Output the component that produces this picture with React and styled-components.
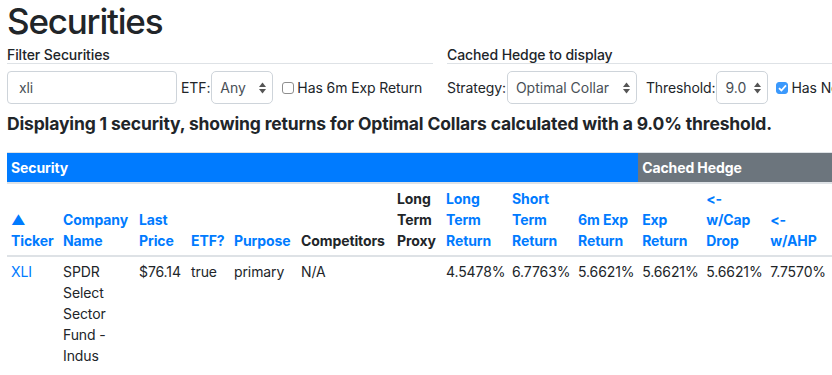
import React from "react"
import styled, { createGlobalStyle } from "styled-components"

const GlobalStyle = createGlobalStyle`
body {
  margin: 0;
  font-family: Inter, "Liberation Sans", sans-serif;
  font-size: 14px;
  line-height: 21px;
  letter-spacing: -0.1px;
  font-feature-settings: "calt" 0, "liga" 0;
  color: #212529;
  background: #fff;
}
`
const Page = styled.div`
width: 100%;
overflow: hidden;
`
const Content = styled.div`
padding-left: 7px;
width: 1000px;
`
const Title = styled.h1`
font-size: 35px;
line-height: 42px;
font-weight: 500;
margin: 0 0 4px 0;
letter-spacing: -1.2px;
`
const FilterRow = styled.div`
display: flex;
gap: 14px;
`
const FilterCol = styled.div`
width: 426px;
flex-shrink: 0;
`
const Legend = styled.div`
font-size: 14px;
line-height: 17px;
font-weight: 500;
border-bottom: 1px solid #dee2e6;
margin-bottom: 7px;
`
const Controls = styled.div`
display: flex;
align-items: center;
white-space: nowrap;
`
const TextInput = styled.div`
width: 170px;
height: 33px;
flex-shrink: 0;
box-sizing: border-box;
border: 1px solid #ced4da;
border-radius: 4px;
padding: 0 11px;
display: flex;
align-items: center;
font-size: 14px;
color: #495057;
margin-right: 4px;
`
const Label = styled.span`
margin-right: 1px;
margin-left: ${p => p.$gap || 0}px;
`
const SelectBox = styled.div`
width: ${p => p.$w}px;
height: 33px;
flex-shrink: 0;
box-sizing: border-box;
border: 1px solid #ced4da;
border-radius: 5px;
padding: 0 6px 0 8px;
display: flex;
align-items: center;
justify-content: space-between;
font-size: 14px;
letter-spacing: 0;
color: #495057;
`
const Check = styled.span`
width: 12px;
height: 12px;
flex-shrink: 0;
box-sizing: border-box;
border-radius: 3px;
margin: 0 3px 0 ${p => p.$gap}px;
border: 1px solid ${p => (p.$on ? "#3b99fc" : "#8e8e8e")};
background: ${p => (p.$on ? "#3b99fc" : "#fff")};
display: inline-flex;
align-items: center;
justify-content: center;
`
const Summary = styled.h5`
font-size: 17.5px;
line-height: 21px;
font-weight: 700;
letter-spacing: -0.15px;
margin: 9px 0 18px 0;
`
const Table = styled.table`
border-collapse: collapse;
table-layout: fixed;
width: 884px;
`
const GroupTh = styled.th`
background: ${p => (p.$gray ? "#6c757d" : "#007bff")};
color: #fff;
text-align: left;
font-weight: 700;
padding: 4px;
border-top: 1px solid #dee2e6;
border-bottom: 2px solid #dee2e6;
`
const HeadTh = styled.th`
text-align: left;
vertical-align: bottom;
font-weight: 700;
padding: 4px;
border-bottom: 2px solid #dee2e6;
color: ${p => (p.$link ? "#007bff" : "#212529")};
`
const Td = styled.td`
vertical-align: top;
padding: 4px;
color: ${p => (p.$link ? "#007bff" : "#212529")};
`

const Arrows = () => (
  <svg width="7" height="12" viewBox="0 0 7 12">
    <polygon points="0,5 3.5,0.5 7,5" fill="#555" />
    <polygon points="0,7 3.5,11.5 7,7" fill="#555" />
  </svg>
)

const Select = ({ w, children }) => (
  <SelectBox $w={w}>
    <span>{children}</span>
    <Arrows />
  </SelectBox>
)

const widths = [52, 76, 52, 43, 67, 96, 49, 66, 66, 64, 64, 64, 64, 61]

const columns = [
  { label: <>▲<br />Ticker</>, link: true },
  { label: "Company Name", link: true },
  { label: "Last Price", link: true },
  { label: "ETF?", link: true },
  { label: "Purpose", link: true },
  { label: "Competitors" },
  { label: "Long Term Proxy" },
  { label: "Long Term Return", link: true },
  { label: "Short Term Return", link: true },
  { label: "6m Exp Return", link: true },
  { label: "Exp Return", link: true },
  { label: <>&lt;-<br />w/Cap Drop</>, link: true },
  { label: <>&lt;-<br />w/AHP</>, link: true },
  { label: "", link: true },
]

const row = [
  { v: "XLI", link: true },
  { v: "SPDR Select Sector Fund - Indus" },
  { v: "$76.14" },
  { v: "true" },
  { v: "primary" },
  { v: "N/A" },
  { v: "" },
  { v: "4.5478%" },
  { v: "6.7763%" },
  { v: "5.6621%" },
  { v: "5.6621%" },
  { v: "5.6621%" },
  { v: "7.7570%" },
  { v: "" },
]

const App = () => {
  return (
    <Page>
      <GlobalStyle />
      <Content>
        <Title>Securities</Title>
        <FilterRow>
          <FilterCol>
            <Legend>Filter Securities</Legend>
            <Controls>
              <TextInput>xli</TextInput>
              <Label>ETF:</Label>
              <Select w={62}>Any</Select>
              <Check $gap={9} />
              <span>Has 6m Exp Return</span>
            </Controls>
          </FilterCol>
          <FilterCol>
            <Legend>Cached Hedge to display</Legend>
            <Controls>
              <Label>Strategy:</Label>
              <Select w={130}>Optimal Collar</Select>
              <Label $gap={9}>Threshold:</Label>
              <Select w={52}>9.0</Select>
              <Check $gap={8} $on>
                <svg width="9" height="8" viewBox="0 0 9 8">
                  <path d="M1 4.2 L3.4 6.5 L8 1.3" stroke="#fff" strokeWidth="1.8" fill="none" />
                </svg>
              </Check>
              <span>Has Nonzero Exp Return</span>
            </Controls>
          </FilterCol>
        </FilterRow>
        <Summary>
          Displaying 1 security, showing returns for Optimal Collars calculated with a 9.0% threshold.
        </Summary>
        <Table>
          <colgroup>
            {widths.map((w, i) => <col key={i} style={{ width: w }} />)}
          </colgroup>
          <thead>
            <tr>
              <GroupTh colSpan={10}>Security</GroupTh>
              <GroupTh colSpan={4} $gray>Cached Hedge</GroupTh>
            </tr>
            <tr>
              {columns.map((c, i) => (
                <HeadTh key={i} $link={c.link}>{c.label}</HeadTh>
              ))}
            </tr>
          </thead>
          <tbody>
            <tr>
              {row.map((c, i) => (
                <Td key={i} $link={c.link}>{c.v}</Td>
              ))}
            </tr>
          </tbody>
        </Table>
      </Content>
    </Page>
  )
}
export default App
